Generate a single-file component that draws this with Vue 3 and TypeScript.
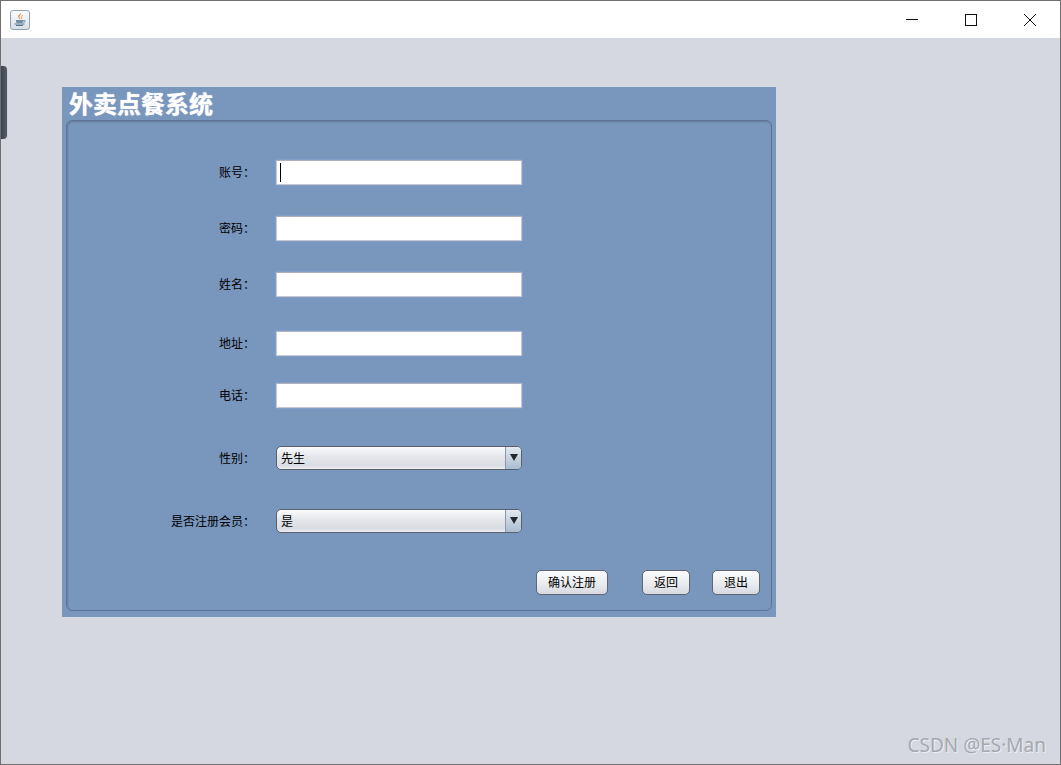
<template>
  <div class="window">
    <header class="titlebar">
      <span class="app-icon">
        <svg width="14" height="15" viewBox="0 0 14 15">
          <path d="M8 0.5C9 2.5 6 3.5 6.5 5.5C7 6.5 7.5 7 7.5 7.5C6 6.5 4.5 5 5.5 3.5C6.2 2.5 7.8 2 8 0.5Z" fill="#e8873a" />
          <path d="M9.5 3C9 4.5 8 5 8.5 7" fill="none" stroke="#eda25e" stroke-width="1" />
          <path d="M3 8H10V9.5C10 10.5 9 11 8 11H5C4 11 3 10.5 3 9.5Z" fill="#6f8fa8" />
          <path d="M10 8.5H12V10H10" fill="none" stroke="#6f8fa8" stroke-width="0.8" />
          <path d="M1.5 12H11.5M3 13.5H10" stroke="#56748f" stroke-width="1" />
        </svg>
      </span>
      <div class="window-controls">
        <svg class="control" width="14" height="14" viewBox="0 0 14 14">
          <path d="M1 6.5H13" stroke="#111" stroke-width="1" />
        </svg>
        <svg class="control" width="14" height="14" viewBox="0 0 14 14">
          <rect x="1.5" y="1.5" width="11" height="11" fill="none" stroke="#111" stroke-width="1" />
        </svg>
        <svg class="control" width="14" height="14" viewBox="0 0 14 14">
          <path d="M1 1L13 13M13 1L1 13" stroke="#111" stroke-width="1" />
        </svg>
      </div>
    </header>

    <main class="desktop">
      <span class="side-tab"></span>

      <section class="panel">
        <h1>外卖点餐系统</h1>
        <div class="panel-body">
          <form class="form" @submit.prevent>
            <div
              v-for="row in rows"
              :key="row.label"
              class="row"
              :style="{ marginTop: row.gap + 'px' }"
            >
              <label class="row-label">{{ row.label }}：</label>
              <div v-if="row.options" class="combo">
                <span class="combo-value">{{ row.options[0] }}</span>
                <span class="combo-arrow"></span>
              </div>
              <div v-else class="field">
                <span v-if="row.focused" class="caret"></span>
              </div>
            </div>

            <div class="actions">
              <button type="button" class="btn btn--wide">确认注册</button>
              <button type="button" class="btn">返回</button>
              <button type="button" class="btn">退出</button>
            </div>
          </form>
        </div>
      </section>

      <span class="watermark">CSDN @ES·Man</span>
    </main>
  </div>
</template>

<script setup lang="ts">
interface Row {
  label: string;
  gap: number;
  focused?: boolean;
  options?: string[];
}

const rows: Row[] = [
  { label: "账号", gap: 0, focused: true },
  { label: "密码", gap: 31 },
  { label: "姓名", gap: 31 },
  { label: "地址", gap: 34 },
  { label: "电话", gap: 27 },
  { label: "性别", gap: 38, options: ["先生", "女士"] },
  { label: "是否注册会员", gap: 39, options: ["是", "否"] },
];
</script>

<style>
html,
body {
  margin: 0;
  overflow: hidden;
}
</style>

<style scoped>
.window {
  box-sizing: border-box;
  width: 1061px;
  height: 765px;
  display: flex;
  flex-direction: column;
  border: 1px solid #6f6f6f;
  background: #d5d8e0;
  font-family: "Liberation Sans", "Noto Sans CJK SC", sans-serif;
  overflow: hidden;
}

.titlebar {
  flex: none;
  height: 37px;
  display: flex;
  align-items: center;
  justify-content: space-between;
  background: #fff;
}

.app-icon {
  box-sizing: border-box;
  width: 20px;
  height: 20px;
  margin-left: 9px;
  display: flex;
  align-items: center;
  justify-content: center;
  border: 1px solid #8fa3b8;
  border-radius: 3px;
  background: linear-gradient(#fdfdfd, #d9dee6);
}

.window-controls {
  display: flex;
  gap: 45px;
  margin-right: 23px;
}

.control {
  display: block;
}

.desktop {
  flex: 1;
  position: relative;
  padding: 49px 0 0 61px;
}

.side-tab {
  position: absolute;
  left: -1px;
  top: 28px;
  width: 7px;
  height: 73px;
  border-radius: 0 4px 4px 0;
  background: linear-gradient(90deg, #3a3f4b, #555b69);
  box-shadow: 0 0 1px #8b909c;
}

.panel {
  box-sizing: border-box;
  width: 714px;
  height: 530px;
  display: flex;
  flex-direction: column;
  padding: 0 4px 6px;
  background: #7996bd;
}

h1 {
  margin: 0;
  height: 33px;
  padding-left: 3px;
  font-size: 24px;
  line-height: 36px;
  font-weight: 700;
  color: #fff;
  text-shadow: 0 0 1px #fff;
}

.panel-body {
  flex: 1;
  border: 1px solid #5d7496;
  border-radius: 6px;
  box-shadow: inset 1px 1px 2px #62799b, 0 0 1px #8ba4c6;
}

.form {
  display: flex;
  flex-direction: column;
  padding: 39px 11px 0 0;
}

.row {
  display: flex;
  align-items: center;
}

.row-label {
  box-sizing: border-box;
  width: 188px;
  padding-bottom: 2px;
  font-size: 12px;
  color: #000;
  text-align: right;
}

.field {
  box-sizing: border-box;
  position: relative;
  width: 246px;
  height: 25px;
  margin-left: 21px;
  border: 1px solid #c4c8d0;
  border-top-color: #aeb2bc;
  background: #fff;
  box-shadow: 0 0 2px #8fb2dc;
}

.caret {
  position: absolute;
  left: 3px;
  top: 2px;
  width: 1px;
  height: 19px;
  background: #000;
}

.combo {
  box-sizing: border-box;
  width: 246px;
  height: 24px;
  margin-left: 21px;
  display: flex;
  align-items: center;
  justify-content: space-between;
  border: 1px solid #59616f;
  border-radius: 5px;
  background: linear-gradient(#fbfbfc 0%, #e4e6ea 45%, #d9dce2 85%, #eceef1 100%);
  overflow: hidden;
}

.combo-value {
  padding-left: 4px;
  padding-bottom: 2px;
  font-size: 12px;
  color: #000;
}

.combo-arrow {
  position: relative;
  width: 15px;
  height: 100%;
  border-left: 1px solid #8d98a8;
  background: linear-gradient(#e3e9ef, #a9bed2);
}

.combo-arrow::after {
  content: "";
  position: absolute;
  left: 4px;
  top: 7px;
  border-left: 4px solid transparent;
  border-right: 4px solid transparent;
  border-top: 7px solid #23282f;
}

.actions {
  display: flex;
  justify-content: flex-end;
  gap: 22px;
  margin-top: 37px;
}

.btn {
  box-sizing: border-box;
  width: 48px;
  height: 25px;
  padding: 0 0 2px;
  border: 1px solid #5f6672;
  border-radius: 5px;
  background: linear-gradient(#fcfcfd, #e8eaee 60%, #d6d9e0);
  font: inherit;
  font-size: 12px;
  color: #000;
}

.btn--wide {
  width: 72px;
  margin-right: 12px;
}

.watermark {
  position: absolute;
  right: 14px;
  bottom: 6px;
  font-family: "Noto Sans", sans-serif;
  font-size: 19px;
  color: #a5a8af;
  text-shadow: 1px 1px 0 #eceef2;
}
</style>
